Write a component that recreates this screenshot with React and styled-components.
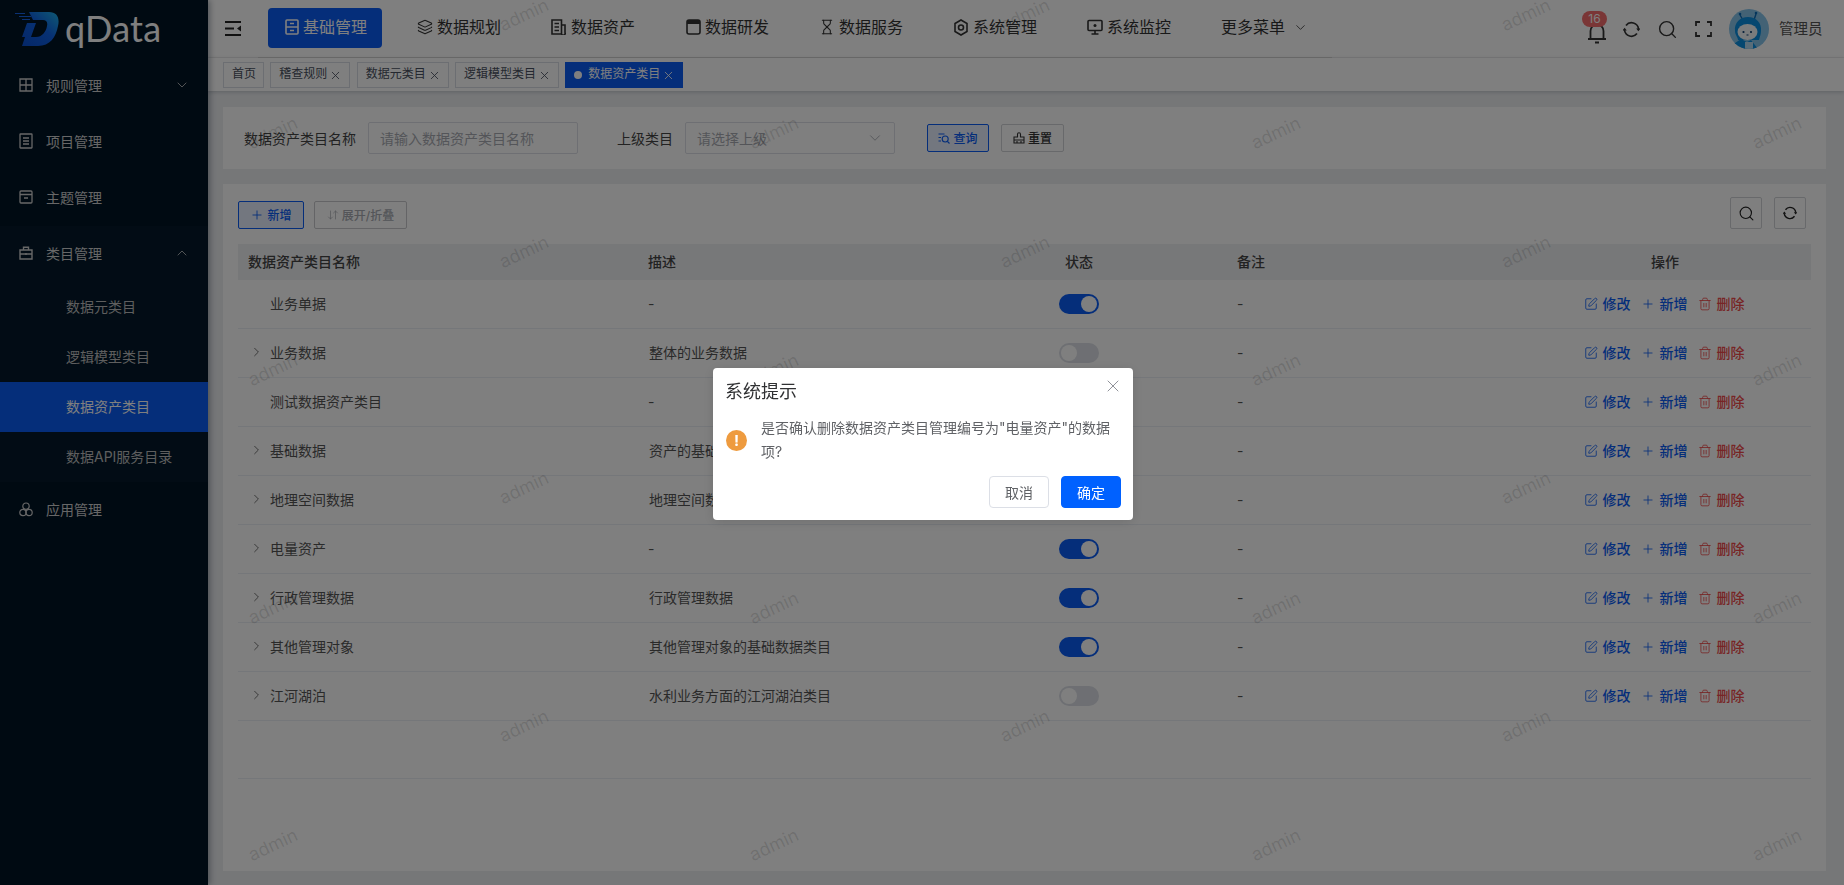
import React from 'react';
import styled, { createGlobalStyle } from 'styled-components';
import {
  ChevronDown,
  ChevronUp,
  ChevronRight,
  X,
  Plus,
  Search,
  Layers,
  Hourglass,
  Trash2,
  SquarePen,
  ArrowDownUp,
} from 'lucide-react';

const primary = '#0a5cf5';
const FONT = '"Inter", "Noto Sans CJK SC", sans-serif';

const GlobalStyle = createGlobalStyle`
  html, body { margin: 0; padding: 0; height: 100%; overflow: hidden; }
  body { font-family: ${FONT}; font-size: 14px; color: #333; background: #eceef1; }
  * { box-sizing: border-box; }
`;

const Layout = styled.div`
  display: flex;
  width: 1844px;
  height: 885px;
  overflow: hidden;
  position: relative;
`;

const Sidebar = styled.aside`
  width: 208px;
  flex: none;
  height: 100%;
  background: #011424;
  color: #fff;
  position: relative;
  z-index: 3;
  box-shadow: 2px 0 6px rgba(0, 21, 41, 0.35);
`;

const LogoRow = styled.div`
  height: 58px;
  display: flex;
  align-items: center;
  padding-left: 15px;
  gap: 6px;
`;

const LogoText = styled.span`
  font-family: "Lato", sans-serif;
  font-size: 36px;
  line-height: 40px;
  color: #fff;
  letter-spacing: 0.2px;
  margin-top: -3px;
`;

const MenuItem = styled.div`
  height: 56px;
  display: flex;
  align-items: center;
  padding: 0 0 2px 19px;
  gap: 13px;
  color: #cfcfcf;
  font-size: 14px;
  position: relative;
  svg.arrow { position: absolute; right: 18px; }
`;

const SubGroup = styled.div`
  background: #04192b;
`;

const SubItem = styled.div`
  height: 50px;
  display: flex;
  align-items: center;
  padding: 0 0 2px 66px;
  font-size: 14px;
  color: ${(p) => (p.$active ? '#fff' : '#bdbdbd')};
  background: ${(p) => (p.$active ? primary : 'transparent')};
`;

const Main = styled.div`
  flex: 1;
  min-width: 0;
  display: flex;
  flex-direction: column;
  position: relative;
`;

const Header = styled.header`
  height: 58px;
  background: #fff;
  display: flex;
  align-items: flex-start;
  border-bottom: 1px solid #f1f1f1;
`;

const Hamburger = styled.div`
  width: 50px;
  height: 58px;
  display: flex;
  align-items: center;
  justify-content: flex-start;
  padding: 0 0 2px 17px;
  color: #222;
`;

const TopMenu = styled.nav`
  width: 1074px;
  height: 58px;
  display: flex;
  align-items: flex-start;
  padding: 8px 0 0 10px;
  gap: 20px;
  border-bottom: 1px solid #d9d9d9;
`;

const TopItem = styled.div`
  width: 114px;
  height: 40px;
  flex: none;
  border-radius: 4px;
  display: flex;
  align-items: center;
  padding: 0 0 2px ${(p) => (p.$active ? '17px' : '15px')};
  gap: 4px;
  font-size: 16px;
  line-height: 38px;
  color: ${(p) => (p.$active ? '#fff' : '#333')};
  background: ${(p) => (p.$active ? primary : 'transparent')};
  white-space: nowrap;
`;

const TopRight = styled.div`
  flex: 1;
  height: 58px;
  display: flex;
  align-items: center;
  padding-left: 255px;
  color: #333;
`;

const BellWrap = styled.div`
  position: relative;
  width: 20px;
  height: 22px;
  margin-top: 8px;
  color: #333;
`;

const Badge = styled.span`
  position: absolute;
  left: -5px;
  top: -11px;
  width: 25px;
  height: 16px;
  border-radius: 8px;
  background: #f56c6c;
  color: #fff;
  font-size: 12px;
  line-height: 16px;
  text-align: center;
`;

const HeadIcon = styled.div`
  width: 36px;
  display: flex;
  justify-content: center;
  color: #333;
`;

const AvatarBox = styled.div`
  width: 40px;
  height: 40px;
  margin-left: 8px;
  border-radius: 50%;
  overflow: hidden;
  flex: none;
`;

const UserName = styled.span`
  margin-left: 10px;
  padding-bottom: 3px;
  font-size: 14.5px;
  color: #555;
`;

const TabsBar = styled.div`
  height: 33px;
  background: #fff;
  display: flex;
  align-items: center;
  padding: 1px 0 0 15px;
  gap: 6.3px;
  box-shadow: 0 1px 4px rgba(0, 21, 41, 0.2);
  position: relative;
  z-index: 1;
`;

const Tag = styled.div`
  height: 26px;
  display: flex;
  align-items: center;
  padding: 0 7px 2px 8px;
  font-size: 12px;
  line-height: 22px;
  border: 1px solid ${(p) => (p.$active ? primary : '#d8dce5')};
  color: ${(p) => (p.$active ? '#fff' : '#495060')};
  background: ${(p) => (p.$active ? primary : '#fff')};
  svg { margin-left: 2px; margin-top: 3px; }
`;

const TagDot = styled.i`
  width: 8px;
  height: 8px;
  border-radius: 50%;
  background: #fff;
  margin: 2px 6px 0 0;
`;

const Content = styled.main`
  flex: 1;
  padding: 16px 18px 14px 15px;
  display: flex;
  flex-direction: column;
  gap: 15px;
  background: #eceef1;
`;

const Card = styled.section`
  background: #fff;
`;

const FormCard = styled(Card)`
  height: 62px;
  display: flex;
  align-items: center;
  padding-left: 21px;
`;

const FieldLabel = styled.label`
  font-size: 14px;
  color: #444;
  margin-right: 12px;
  white-space: nowrap;
`;

const Field = styled.div`
  width: 210px;
  height: 32px;
  border: 1px solid #dcdfe6;
  border-radius: 2px;
  display: flex;
  align-items: center;
  justify-content: space-between;
  padding: 0 10px 0 11px;
  color: #a8abb2;
  font-size: 14px;
  margin-right: ${(p) => p.$gap || '0'};
`;

const Btn = styled.button`
  height: 28px;
  width: ${(p) => p.$w || 'auto'};
  display: inline-flex;
  align-items: center;
  justify-content: center;
  gap: 3px;
  padding: 0 0 1px;
  font: 500 12px ${FONT};
  border-radius: 2px;
  border: 1px solid ${(p) => (p.$kind === 'primary' ? primary : p.$kind === 'muted' ? '#c8c9cc' : '#d0d2d6')};
  background: ${(p) => (p.$kind === 'primary' ? '#e6effe' : '#fff')};
  color: ${(p) => (p.$kind === 'primary' ? primary : p.$kind === 'muted' ? '#a8abb2' : '#333')};
`;

const TableCard = styled(Card)`
  flex: 1;
  padding: 13px 15px 0;
`;

const Toolbar = styled.div`
  height: 32px;
  display: flex;
  align-items: flex-end;
  gap: 10px;
  margin-bottom: 15px;
`;

const ToolRight = styled.div`
  margin-left: auto;
  margin-right: 5px;
  display: flex;
  gap: 12px;
  align-items: center;
`;

const IconBtn = styled.button`
  width: 32px;
  height: 32px;
  padding: 0;
  display: flex;
  align-items: center;
  justify-content: center;
  border: 1px solid #d0d2d6;
  border-radius: 2px;
  background: #fff;
  color: #222;
`;

const Row = styled.div`
  display: grid;
  grid-template-columns: 400px 293px 296px 292px 1fr;
  align-items: center;
  height: ${(p) => (p.$head ? '36px' : '49px')};
  background: ${(p) => (p.$head ? '#eef0f3' : 'transparent')};
  border-bottom: ${(p) => (p.$head ? 'none' : '1px solid #ebeef5')};
  font-weight: ${(p) => (p.$head ? 500 : 400)};
  font-size: 14px;
  color: ${(p) => (p.$head ? '#444' : '#555')};
`;

const Filler = styled.div`
  height: 58px;
  border-bottom: 1px solid #ebeef5;
`;

const Cell = styled.div`
  padding: 0 10px 2px;
  white-space: nowrap;
  text-align: ${(p) => (p.$center ? 'center' : 'left')};
`;

const DescCell = styled(Cell)`
  padding-left: ${(p) => (p.$filled ? '11px' : '10px')};
`;

const SwitchCell = styled.div`
  text-align: center;
  line-height: 0;
`;

const NameCell = styled(Cell)`
  display: flex;
  align-items: center;
  padding-left: ${(p) => (p.$head ? '10px' : '12px')};
  gap: 5px;
`;

const Expander = styled.span`
  width: 15px;
  height: 15px;
  display: flex;
  align-items: center;
  margin-left: -1px;
  margin-right: 1px;
  color: #555;
`;

const Switch = styled.span`
  display: inline-block;
  width: 40px;
  height: 20px;
  border-radius: 10px;
  position: relative;
  background: ${(p) => (p.$on ? primary : '#dcdfe6')};
  &::after {
    content: '';
    position: absolute;
    top: 2px;
    left: ${(p) => (p.$on ? '22px' : '2px')};
    width: 16px;
    height: 16px;
    border-radius: 50%;
    background: #fff;
  }
`;

const Ops = styled(Cell)`
  display: flex;
  justify-content: center;
  gap: 10px;
  padding-left: 0;
  padding-right: 2px;
`;

const OpLink = styled.span`
  display: inline-flex;
  align-items: center;
  gap: 5px;
  font-weight: 500;
  color: ${(p) => (p.$danger ? '#ef4a4a' : primary)};
  svg { margin-top: 2px; }
`;

const WatermarkLayer = styled.div`
  position: absolute;
  inset: 0;
  pointer-events: none;
  z-index: 2;
  overflow: hidden;
`;

const Mark = styled.span`
  position: absolute;
  font-size: 18px;
  line-height: 22px;
  color: rgba(0, 0, 0, 0.13);
  transform: translate(-50%, -50%) rotate(-25deg);
`;

const Mask = styled.div`
  position: fixed;
  inset: 0;
  background: rgba(0, 0, 0, 0.5);
  z-index: 10;
  display: flex;
  align-items: center;
  justify-content: center;
  padding: 3px 0 0 2px;
`;

const Dialog = styled.div`
  width: 420px;
  height: 152px;
  background: #fff;
  border-radius: 4px;
  box-shadow: 0 2px 12px rgba(0, 0, 0, 0.12);
  padding: 12px;
  position: relative;
`;

const DialogTitle = styled.div`
  font-size: 18px;
  line-height: 24px;
  color: #303133;
`;

const DialogClose = styled.span`
  position: absolute;
  top: 8px;
  right: 10px;
  color: #85888f;
  display: flex;
`;

const DialogBody = styled.div`
  display: flex;
  align-items: center;
  gap: 14px;
  margin-top: 12px;
  height: 48px;
`;

const WarnDot = styled.span`
  width: 21px;
  height: 21px;
  margin-left: 1px;
  border-radius: 50%;
  background: #ee9b3f;
  color: #fff;
  font-size: 15px;
  font-weight: 700;
  line-height: 21px;
  text-align: center;
  flex: none;
`;

const DialogText = styled.p`
  margin: 0;
  font-size: 14px;
  line-height: 24.5px;
  color: #606266;
  width: 350px;
`;

const DialogFooter = styled.div`
  display: flex;
  justify-content: flex-end;
  gap: 12px;
  margin-top: 12px;
`;

const DialogBtn = styled.button`
  width: 60px;
  height: 32px;
  padding: 0;
  border-radius: 4px;
  font: 14px ${FONT};
  border: 1px solid ${(p) => (p.$primary ? '#0061ff' : '#dcdfe6')};
  background: ${(p) => (p.$primary ? '#0061ff' : '#fff')};
  color: ${(p) => (p.$primary ? '#fff' : '#606266')};
`;

const line = { fill: 'none', stroke: 'currentColor', strokeWidth: 1.6 };

const MenuFold = () => (
  <svg width="17" height="15" viewBox="0 0 17 15">
    <path d="M0 1h16M0 7.500h9M0 14h16" {...line} strokeWidth="1.8" />
    <path d="M16 4.500v6l-4-3z" fill="currentColor" />
  </svg>
);

const BoxIcon = () => (
  <svg width="14" height="16" viewBox="0 0 14 16">
    <rect x="1" y="1" width="12" height="14" rx="1" {...line} />
    <path d="M1 8h12M5 4.500h4M5 11.500h4" {...line} />
  </svg>
);

const DocIcon = () => (
  <svg width="16" height="16" viewBox="0 0 16 16">
    <path d="M1 1h9.500v14H1zM10.500 6H14v7.500a1.500 1.500 0 0 1-3.500 1.500" {...line} />
    <path d="M3.500 4.500h4.500M3.500 8h4.500M3.500 11.500h4.500" {...line} />
  </svg>
);

const WindowIcon = () => (
  <svg width="16" height="16" viewBox="0 0 16 16">
    <rect x="2" y="1" width="13" height="14" rx="2" {...line} />
    <path d="M3 1h11a1 1 0 0 1 1 1v3H2V2a1 1 0 0 1 1-1z" fill="currentColor" />
  </svg>
);

const HexIcon = () => (
  <svg width="16" height="17" viewBox="0 0 16 17">
    <path d="M8 1l6 3.500v8L8 16l-6-3.500v-8z" {...line} />
    <circle cx="8" cy="8.500" r="2.500" {...line} />
  </svg>
);

const MonitorIcon = () => (
  <svg width="16" height="16" viewBox="0 0 16 16">
    <rect x="1" y="1.500" width="14" height="10" rx="1" {...line} />
    <path d="M8 11.500V15M4.500 15h7" {...line} />
    <circle cx="8" cy="6.500" r="1.500" fill="currentColor" />
  </svg>
);

const BellIcon = () => (
  <svg width="20" height="22" viewBox="0 0 20 22">
    <path d="M1 17h18M3.500 17V9a6.500 6.500 0 0 1 13 0v8M8 20.500h4" {...line} strokeWidth="1.8" />
  </svg>
);

// two arcs with arrow heads, the refresh glyph of the reference
const RefreshIcon = ({ size = 17 }) => (
  <svg width={size} height={size} viewBox="0 0 17 17">
    <path d="M3 4.500A7 7 0 0 1 15.500 8M14 12.500A7 7 0 0 1 1.500 9" {...line} strokeWidth="1.7" />
    <path d="M13.200 7.500h4.300l-2.150 2.800zM3.800 9.500H-.5l2.150-2.800z" fill="currentColor" />
  </svg>
);

const FullscreenIcon = () => (
  <svg width="17" height="16" viewBox="0 0 17 16">
    <path d="M1 5V1h4M12 1h4v4M16 11v4h-4M5 15H1v-4" {...line} strokeWidth="1.8" />
  </svg>
);

const RuleIcon = () => (
  <svg width="14" height="14" viewBox="0 0 14 14">
    <path d="M1 1h12v12H1zM7 1v12M1 7h12" {...line} strokeWidth="1.3" />
  </svg>
);

const ProjectIcon = () => (
  <svg width="14" height="16" viewBox="0 0 14 16">
    <rect x="1" y="1" width="12" height="14" rx="0.500" {...line} strokeWidth="1.3" />
    <path d="M4 5h6M4 8h6M4 11h6" {...line} strokeWidth="1.3" />
  </svg>
);

const SubjectIcon = () => (
  <svg width="14" height="14" viewBox="0 0 14 14">
    <rect x="1" y="1" width="12" height="12" rx="1" {...line} strokeWidth="1.3" />
    <path d="M1 4.500h12M5 8h4" {...line} strokeWidth="1.3" />
  </svg>
);

const CaseIcon = () => (
  <svg width="14" height="14" viewBox="0 0 14 14">
    <path d="M1 4h12v9H1zM4.500 4V1.200h5V4M1 8h12M7 7v2" {...line} strokeWidth="1.4" />
  </svg>
);

const AppIcon = () => (
  <svg width="14" height="15" viewBox="0 0 14 15">
    <circle cx="7" cy="4.200" r="3.200" {...line} strokeWidth="1.2" />
    <circle cx="4" cy="10.500" r="3.200" {...line} strokeWidth="1.2" />
    <circle cx="10" cy="10.500" r="3.200" {...line} strokeWidth="1.2" />
  </svg>
);

const QueryIcon = () => (
  <svg width="12" height="12" viewBox="0 0 12 12">
    <path d="M.5 2h6M.5 5.500h2.500M.5 9h2.500" {...line} strokeWidth="1.1" />
    <circle cx="7.200" cy="7" r="3" {...line} strokeWidth="1.1" />
    <path d="M9.500 9.500l2 2" {...line} strokeWidth="1.1" />
  </svg>
);

const ResetIcon = () => (
  <svg width="12" height="13" viewBox="0 0 12 13">
    <path d="M1 12V6h3.500V3.200a1.500 1.500 0 0 1 3 0V6H11v6zM1 9h10M4 12v-2M8 12v-2" {...line} strokeWidth="1.1" />
  </svg>
);

const Logo = () => (
  <svg width="44" height="34" viewBox="0 0 44 34">
    <defs>
      <linearGradient id="logoFill" x1="0" y1="1" x2="1" y2="0">
        <stop offset="0" stopColor="#0a4fd0" />
        <stop offset="0.55" stopColor="#0e62e6" />
        <stop offset="1" stopColor="#1fb5e8" />
      </linearGradient>
    </defs>
    <path d="M0 1h10v1H0zM4 4h12v1H4zM7 7h8v1H7z" fill="#1463e8" />
    <path
      d="M14 0h20c8 0 11 6 9 14-2 11-8 20-20 20H7l3-9h11c6 0 10-5 11-11 1-4-1-6-4-6H18zM12 11h9l-5 14H7z"
      fill="url(#logoFill)"
    />
  </svg>
);

const Avatar = () => (
  <svg width="40" height="40" viewBox="0 0 40 40">
    <rect width="40" height="40" fill="#86c4ea" />
    <path d="M11 6l3 5M27 5l-2 6" stroke="#0a6cb8" strokeWidth="1.4" />
    <circle cx="11" cy="5" r="1.300" fill="#0a6cb8" />
    <circle cx="27" cy="4" r="1.300" fill="#0a6cb8" />
    <path d="M6 22C5 14 11 8 19 8s14 6 13 14c0 3-1 5-2 9H9c0-3-3-5-3-9z" fill="#0b8fe0" />
    <ellipse cx="18.500" cy="23" rx="10" ry="8" fill="#f4f8fb" />
    <circle cx="14.500" cy="23" r="1.100" fill="#0a3c70" />
    <circle cx="22" cy="23" r="1.100" fill="#0a3c70" />
    <path d="M17.500 26h2" stroke="#0a3c70" strokeWidth="1" />
    <path d="M3 36l9-6 6 3 4-2 7 9H5z" fill="#0b8fe0" />
    <path d="M16 33h8v7h-8z" fill="#b5dbf3" />
  </svg>
);

const topItems = [
  { label: '数据规划', icon: <Layers size={16} strokeWidth={1.6} /> },
  { label: '数据资产', icon: <DocIcon /> },
  { label: '数据研发', icon: <WindowIcon /> },
  { label: '数据服务', icon: <Hourglass size={16} strokeWidth={1.6} /> },
  { label: '系统管理', icon: <HexIcon /> },
  { label: '系统监控', icon: <MonitorIcon /> },
];

const rows = [
  { name: '业务单据', desc: '-', on: true, leaf: true },
  { name: '业务数据', desc: '整体的业务数据', on: false },
  { name: '测试数据资产类目', desc: '-', on: true, leaf: true },
  { name: '基础数据', desc: '资产的基础数据', on: true },
  { name: '地理空间数据', desc: '地理空间数据', on: true },
  { name: '电量资产', desc: '-', on: true },
  { name: '行政管理数据', desc: '行政管理数据', on: true },
  { name: '其他管理对象', desc: '其他管理对象的基础数据类目', on: true },
  { name: '江河湖泊', desc: '水利业务方面的江河湖泊类目', on: false },
];

// staggered watermark grid, measured off the page
const watermarks = [];
[15, 133, 252, 370, 488, 608, 726, 845].forEach((y, i) => {
  const xs = i % 2 === 0 ? [524, 1025, 1526] : [273, 774, 1276, 1777];
  xs.forEach((x) => watermarks.push({ x, y }));
});

const App = () => {
  return (
    <Layout>
      <GlobalStyle />
      <Sidebar>
        <LogoRow>
          <Logo />
          <LogoText>qData</LogoText>
        </LogoRow>
        <MenuItem>
          <RuleIcon />
          规则管理
          <ChevronDown className="arrow" size={16} strokeWidth={1.2} />
        </MenuItem>
        <MenuItem>
          <ProjectIcon />
          项目管理
        </MenuItem>
        <MenuItem>
          <SubjectIcon />
          主题管理
        </MenuItem>
        <SubGroup>
          <MenuItem>
            <CaseIcon />
            类目管理
            <ChevronUp className="arrow" size={16} strokeWidth={1.2} />
          </MenuItem>
          <SubItem>数据元类目</SubItem>
          <SubItem>逻辑模型类目</SubItem>
          <SubItem $active>数据资产类目</SubItem>
          <SubItem>数据API服务目录</SubItem>
        </SubGroup>
        <MenuItem>
          <AppIcon />
          应用管理
        </MenuItem>
      </Sidebar>

      <Main>
        <Header>
          <Hamburger>
            <MenuFold />
          </Hamburger>
          <TopMenu>
            <TopItem $active>
              <BoxIcon />
              基础管理
            </TopItem>
            {topItems.map((item) => (
              <TopItem key={item.label}>
                {item.icon}
                {item.label}
              </TopItem>
            ))}
            <TopItem>
              更多菜单
              <ChevronDown size={15} strokeWidth={1.3} style={{ marginLeft: 4 }} />
            </TopItem>
          </TopMenu>
          <TopRight>
            <BellWrap>
              <BellIcon />
              <Badge>16</Badge>
            </BellWrap>
            <HeadIcon style={{ marginLeft: 6 }}>
              <RefreshIcon />
            </HeadIcon>
            <HeadIcon>
              <Search size={21} strokeWidth={1.6} />
            </HeadIcon>
            <HeadIcon>
              <FullscreenIcon />
            </HeadIcon>
            <AvatarBox>
              <Avatar />
            </AvatarBox>
            <UserName>管理员</UserName>
          </TopRight>
        </Header>

        <TabsBar>
          <Tag>首页</Tag>
          <Tag>
            稽查规则
            <X size={13} strokeWidth={1.6} />
          </Tag>
          <Tag>
            数据元类目
            <X size={13} strokeWidth={1.6} />
          </Tag>
          <Tag>
            逻辑模型类目
            <X size={13} strokeWidth={1.6} />
          </Tag>
          <Tag $active>
            <TagDot />
            数据资产类目
            <X size={13} strokeWidth={1.6} />
          </Tag>
        </TabsBar>

        <Content>
          <FormCard>
            <FieldLabel>数据资产类目名称</FieldLabel>
            <Field $gap="39px">请输入数据资产类目名称</Field>
            <FieldLabel>上级类目</FieldLabel>
            <Field $gap="32px">
              请选择上级
              <ChevronDown size={18} strokeWidth={1.2} />
            </Field>
            <Btn $kind="primary" $w="62px">
              <QueryIcon />
              查询
            </Btn>
            <Btn $w="63px" style={{ marginLeft: 12 }}>
              <ResetIcon />
              重置
            </Btn>
          </FormCard>

          <TableCard>
            <Toolbar>
              <Btn $kind="primary" $w="66px">
                <Plus size={14} strokeWidth={1.5} />
                新增
              </Btn>
              <Btn $kind="muted" $w="93px">
                <ArrowDownUp size={12} strokeWidth={1.4} />
                展开/折叠
              </Btn>
              <ToolRight>
                <IconBtn>
                  <Search size={17} strokeWidth={1.6} />
                </IconBtn>
                <IconBtn>
                  <RefreshIcon size={14} />
                </IconBtn>
              </ToolRight>
            </Toolbar>

            <Row $head>
              <NameCell $head>数据资产类目名称</NameCell>
              <Cell>描述</Cell>
              <Cell $center>状态</Cell>
              <Cell>备注</Cell>
              <Cell $center>操作</Cell>
            </Row>
            {rows.map((row) => (
              <Row key={row.name}>
                <NameCell>
                  <Expander>{!row.leaf && <ChevronRight size={16} strokeWidth={1.3} />}</Expander>
                  {row.name}
                </NameCell>
                <DescCell $filled={row.desc !== '-'}>{row.desc}</DescCell>
                <SwitchCell>
                  <Switch $on={row.on} />
                </SwitchCell>
                <Cell>-</Cell>
                <Ops>
                  <OpLink>
                    <SquarePen size={14} strokeWidth={1.4} />
                    修改
                  </OpLink>
                  <OpLink>
                    <Plus size={14} strokeWidth={1.4} />
                    新增
                  </OpLink>
                  <OpLink $danger>
                    <Trash2 size={14} strokeWidth={1.4} />
                    删除
                  </OpLink>
                </Ops>
              </Row>
            ))}
            <Filler />
          </TableCard>
        </Content>
      </Main>

      <WatermarkLayer>
        {watermarks.map((m) => (
          <Mark key={`${m.x}-${m.y}`} style={{ left: m.x, top: m.y }}>
            admin
          </Mark>
        ))}
      </WatermarkLayer>

      <Mask>
        <Dialog>
          <DialogTitle>系统提示</DialogTitle>
          <DialogClose>
            <X size={20} strokeWidth={1.1} />
          </DialogClose>
          <DialogBody>
            <WarnDot>!</WarnDot>
            <DialogText>是否确认删除数据资产类目管理编号为"电量资产"的数据项?</DialogText>
          </DialogBody>
          <DialogFooter>
            <DialogBtn>取消</DialogBtn>
            <DialogBtn $primary>确定</DialogBtn>
          </DialogFooter>
        </Dialog>
      </Mask>
    </Layout>
  );
};

export default App;
